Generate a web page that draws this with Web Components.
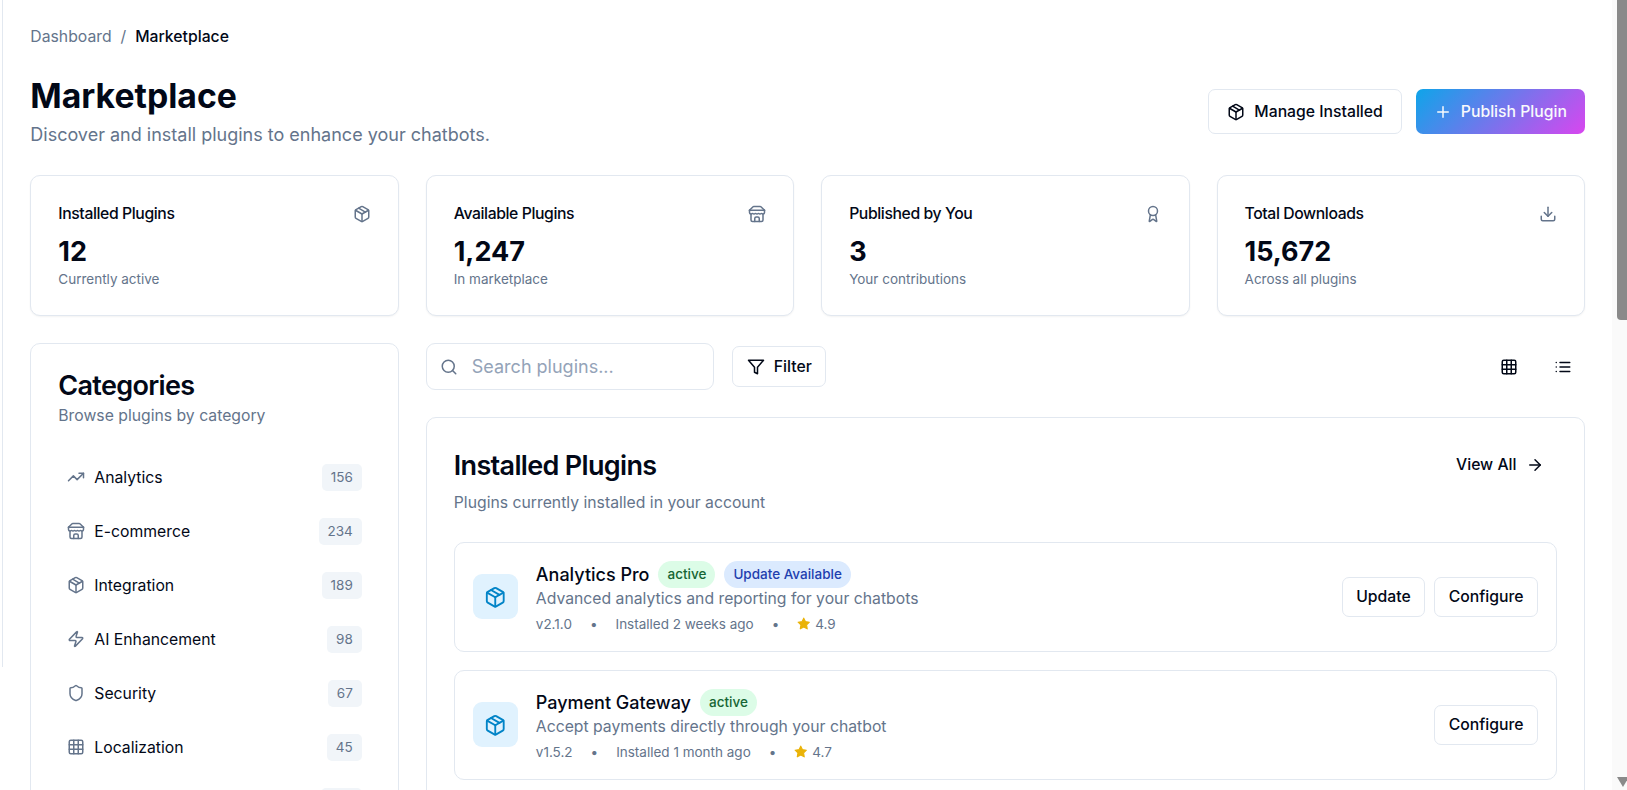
<!DOCTYPE html>
<html lang="en">
<head>
<meta charset="utf-8">
<title>Marketplace</title>
<style>
  html, body { margin: 0; height: 790px; overflow: hidden; background: #fff; }
  body { font-family: Inter, "Liberation Sans", sans-serif; color: #020817; }
</style>
</head>
<body>
<mp-shell>
  <mp-header></mp-header>
  <mp-stats>
    <mp-stat label="Installed Plugins" value="12" note="Currently active" icon="package"></mp-stat>
    <mp-stat label="Available Plugins" value="1,247" note="In marketplace" icon="store"></mp-stat>
    <mp-stat label="Published by You" value="3" note="Your contributions" icon="award"></mp-stat>
    <mp-stat label="Total Downloads" value="15,672" note="Across all plugins" icon="download"></mp-stat>
  </mp-stats>
  <mp-columns>
    <mp-categories slot="side">
      <mp-category icon="trending" count="156">Analytics</mp-category>
      <mp-category icon="store" count="234">E-commerce</mp-category>
      <mp-category icon="package" count="189">Integration</mp-category>
      <mp-category icon="zap" count="98">AI Enhancement</mp-category>
      <mp-category icon="shield" count="67">Security</mp-category>
      <mp-category icon="grid" count="45">Localization</mp-category>
      <mp-category></mp-category>
    </mp-categories>
    <mp-toolbar></mp-toolbar>
    <mp-installed>
      <mp-plugin name="Analytics Pro" desc="Advanced analytics and reporting for your chatbots" version="v2.1.0" installed="Installed 2 weeks ago" rating="4.9" update></mp-plugin>
      <mp-plugin name="Payment Gateway" desc="Accept payments directly through your chatbot" version="v1.5.2" installed="Installed 1 month ago" rating="4.7"></mp-plugin>
    </mp-installed>
  </mp-columns>
</mp-shell>
<script>
(function() {
// lucide-style icon bodies, all on a 24 box
const ICONS = {
  package: '<path d="m7.5 4.27 9 5.15"/><path d="M21 8a2 2 0 0 0-1-1.73l-7-4a2 2 0 0 0-2 0l-7 4A2 2 0 0 0 3 8v8a2 2 0 0 0 1 1.73l7 4a2 2 0 0 0 2 0l7-4A2 2 0 0 0 21 16Z"/><path d="m3.3 7 8.7 5 8.7-5"/><path d="M12 22V12"/>',
  store: '<path d="m2 7 4.41-4.41A2 2 0 0 1 7.83 2h8.34a2 2 0 0 1 1.42.59L22 7"/><path d="M4 12v8a2 2 0 0 0 2 2h12a2 2 0 0 0 2-2v-8"/><path d="M15 22v-4a2 2 0 0 0-2-2h-2a2 2 0 0 0-2 2v4"/><path d="M2 7h20"/><path d="M22 7v3a2 2 0 0 1-2 2a2.7 2.7 0 0 1-1.59-.63.7.7 0 0 0-.82 0A2.7 2.7 0 0 1 16 12a2.7 2.7 0 0 1-1.59-.63.7.7 0 0 0-.82 0A2.7 2.7 0 0 1 12 12a2.7 2.7 0 0 1-1.59-.63.7.7 0 0 0-.82 0A2.7 2.7 0 0 1 8 12a2.7 2.7 0 0 1-1.59-.63.7.7 0 0 0-.82 0A2.7 2.7 0 0 1 4 12a2 2 0 0 1-2-2V7"/>',
  award: '<path d="m15.477 12.89 1.515 8.526a.5.5 0 0 1-.81.47l-3.58-2.687a1 1 0 0 0-1.197 0l-3.586 2.686a.5.5 0 0 1-.81-.469l1.514-8.526"/><circle cx="12" cy="8" r="6"/>',
  download: '<path d="M21 15v4a2 2 0 0 1-2 2H5a2 2 0 0 1-2-2v-4"/><polyline points="7 10 12 15 17 10"/><line x1="12" y1="15" x2="12" y2="3"/>',
  search: '<circle cx="11" cy="11" r="8"/><path d="m21 21-4.3-4.3"/>',
  filter: '<polygon points="22 3 2 3 10 12.46 10 19 14 21 14 12.46 22 3"/>',
  grid: '<rect width="18" height="18" x="3" y="3" rx="2"/><path d="M3 9h18"/><path d="M3 15h18"/><path d="M9 3v18"/><path d="M15 3v18"/>',
  list: '<line x1="8" y1="6" x2="21" y2="6"/><line x1="8" y1="12" x2="21" y2="12"/><line x1="8" y1="18" x2="21" y2="18"/><line x1="3" y1="6" x2="3.01" y2="6"/><line x1="3" y1="12" x2="3.01" y2="12"/><line x1="3" y1="18" x2="3.01" y2="18"/>',
  arrow: '<path d="M5 12h14"/><path d="m12 5 7 7-7 7"/>',
  plus: '<path d="M5 12h14"/><path d="M12 5v14"/>',
  trending: '<polyline points="22 7 13.5 15.5 8.5 10.5 2 17"/><polyline points="16 7 22 7 22 13"/>',
  zap: '<path d="M4 14a1 1 0 0 1-.78-1.63l9.9-10.2a.5.5 0 0 1 .86.46l-1.92 6.02A1 1 0 0 0 13 10h7a1 1 0 0 1 .78 1.63l-9.9 10.2a.5.5 0 0 1-.86-.46l1.92-6.02A1 1 0 0 0 11 14z"/>',
  shield: '<path d="M20 13c0 5-3.5 7.5-7.66 8.95a1 1 0 0 1-.67-.01C7.5 20.5 4 18 4 13V6a1 1 0 0 1 1-1c2 0 4.5-1.2 6.24-2.72a1.17 1.17 0 0 1 1.52 0C14.51 3.81 17 5 19 5a1 1 0 0 1 1 1z"/>',
  star: '<polygon fill="currentColor" points="12 2 15.09 8.26 22 9.27 17 14.14 18.18 21.02 12 17.77 5.82 21.02 7 14.14 2 9.27 8.91 8.26"/>'
};

// small helper so every element below stays short
function define(tag, css, html) {
  customElements.define(tag, class extends HTMLElement {
    connectedCallback() {
      if (this.shadowRoot) return;
      const a = (n) => this.getAttribute(n) || '';
      const root = this.attachShadow({mode: 'open'});
      root.innerHTML = `<style>${css}</style>${html(a, this)}`;
    }
  });
}

define('mp-icon', ':host{display:inline-flex;flex:none;line-height:0} svg{display:block}', (a) => {
  const size = a('size') || 18;
  return `<svg xmlns="http://www.w3.org/2000/svg" width="${size}" height="${size}" viewBox="0 0 24 24" fill="none" stroke="currentColor" stroke-width="2" stroke-linecap="round" stroke-linejoin="round">${ICONS[a('name')] || ''}</svg>`;
});

// default is the small outline button, --h and --px make the bigger ones
define('mp-button', `
  :host{display:inline-flex}
  div{box-sizing:border-box;display:flex;align-items:center;justify-content:center;height:var(--h,40.5px);padding:0 var(--px,13.5px);gap:9px;
      border:1px solid #e2e8f0;border-radius:7px;background:#fff;color:#020817;font:500 15.75px/1 Inter,sans-serif;white-space:nowrap}
  :host([primary]) div{border:0;color:#f8fafc;background:linear-gradient(135deg,#0ea5e9,#d946ef)}
  :host([ghost]) div{border:0;background:transparent}
`, () => '<div><slot></slot></div>');

define('mp-shell', `
  :host{display:flex;height:790px;overflow:hidden;position:relative}
  .rail{flex:none;box-sizing:border-box;width:3.3px;height:667px;border-right:1px solid #e2e8f0}
  main{flex:1;min-width:0;box-sizing:border-box;padding:26px 27px 0;display:flex;flex-direction:column;margin-right:15px}
  .bar{position:absolute;top:0;right:0;bottom:0;width:15px;background:#fafafa;overflow:hidden}
  .thumb{position:absolute;top:0;right:0;width:10px;height:320px;background:#8a8a8a;border-radius:0 0 0 4px}
  .arrow{position:absolute;right:-2px;bottom:3px;width:0;height:0;border-left:6.5px solid transparent;border-right:6.5px solid transparent;border-top:10px solid #8a8a8a}
`, () => `<div class="rail"></div><main><slot></slot></main><div class="bar"><div class="thumb"></div><div class="arrow"></div></div>`);

define('mp-header', `
  :host{display:block}
  nav{display:flex;gap:9px;font-size:15.75px;line-height:22.5px;color:#64748b}
  nav b{font-weight:500;color:#020817}
  .row{display:flex;justify-content:space-between;align-items:flex-start;margin-top:27px}
  h1{margin:0;font-size:33.75px;line-height:40.5px;font-weight:700;color:#020817}
  p{margin:4.5px 0 0;font-size:18px;line-height:27px;color:#64748b}
  .acts{display:flex;gap:14px;margin-top:13.8px}
  mp-button{--h:45px;--px:18px}
`, () => `<nav><span>Dashboard</span><span>/</span><b>Marketplace</b></nav>
  <div class="row"><div><h1>Marketplace</h1><p>Discover and install plugins to enhance your chatbots.</p></div>
  <div class="acts"><mp-button><mp-icon name="package"></mp-icon>Manage Installed</mp-button>
  <mp-button primary><mp-icon name="plus"></mp-icon>Publish Plugin</mp-button></div></div>`);

define('mp-stats', ':host{display:grid;grid-template-columns:repeat(4,1fr);gap:27px;margin-top:27.8px}', () => '<slot></slot>');

define('mp-stat', `
  :host{display:block;box-sizing:border-box;height:141px;padding:26px 27px 27px;border:1px solid #e2e8f0;border-radius:10px;background:#fff;box-shadow:0 1px 2px rgba(0,0,0,.05)}
  .top{display:flex;justify-content:space-between;align-items:center;height:22.5px}
  .label{font-size:15.75px;font-weight:500;color:#020817;letter-spacing:-.4px}
  mp-icon{color:#64748b}
  .value{margin-top:9px;font-size:27px;line-height:36px;font-weight:700;color:#020817}
  .note{font-size:13.5px;line-height:18px;color:#64748b}
`, (a) => `<div class="top"><span class="label">${a('label')}</span><mp-icon name="${a('icon')}"></mp-icon></div>
  <div class="value">${a('value')}</div><div class="note">${a('note')}</div>`);

define('mp-columns', `
  :host{display:grid;grid-template-columns:368.5px 1fr;column-gap:27px;align-items:start;margin-top:27px}
  .main{display:flex;flex-direction:column;gap:27.5px;min-width:0}
`, () => '<div><slot name="side"></slot></div><div class="main"><slot></slot></div>');

define('mp-categories', `
  :host{display:block;box-sizing:border-box;padding:27px 27px 20px;border:1px solid #e2e8f0;border-radius:10px;background:#fff}
  h2{margin:1px 0 0;font-size:27px;line-height:27px;font-weight:600;letter-spacing:-.675px;color:#020817}
  p{margin:5.75px 0 0;font-size:15.75px;line-height:22.5px;color:#64748b}
  .list{margin-top:27px;display:flex;flex-direction:column;gap:9px}
`, () => '<h2>Categories</h2><p>Browse plugins by category</p><div class="list"><slot></slot></div>');

define('mp-category', `
  :host{display:flex;align-items:center;height:45px;padding:0 9px;gap:9px;font-size:15.75px;color:#020817}
  mp-icon{color:#64748b}
  .name{flex:1}
  .count{box-sizing:border-box;text-align:center;height:27px;padding:0 9px;border-radius:5px;background:#f1f5f9;color:#64748b;font-size:13.5px;line-height:27px}
  :host(:last-child) .count{width:41px}
`, (a) => `${a('icon') ? `<mp-icon name="${a('icon')}"></mp-icon>` : ''}<span class="name"><slot></slot></span><span class="count">${a('count')}</span>`);

define('mp-toolbar', `
  :host{display:flex;align-items:center;height:46.5px;gap:18.5px}
  .search{box-sizing:border-box;width:288px;height:46.5px;display:flex;align-items:center;gap:13.5px;padding:0 13.5px;border:1px solid #e2e8f0;border-radius:9px;color:#94a3b8;font-size:18px}
  .search mp-icon{color:#64748b}
  .views{margin-left:auto;display:flex;gap:9px}
  .v{width:45px;height:40.5px;display:flex;align-items:center;justify-content:center;color:#020817}
`, () => `<div class="search"><mp-icon name="search"></mp-icon><span>Search plugins...</span></div>
  <mp-button><mp-icon name="filter"></mp-icon>Filter</mp-button>
  <div class="views"><div class="v"><mp-icon name="grid"></mp-icon></div><div class="v"><mp-icon name="list"></mp-icon></div></div>`);

define('mp-installed', `
  :host{display:block;box-sizing:border-box;padding:26px 27px 27px;border:1px solid #e2e8f0;border-radius:10px;background:#fff}
  .top{display:flex;justify-content:space-between;align-items:center;height:40.5px}
  h2{margin:3px 0 0;font-size:27px;line-height:36px;font-weight:600;letter-spacing:-.675px;color:#020817}
  p{margin:7.7px 0 0;font-size:15.75px;line-height:22.5px;color:#64748b}
  .list{margin-top:27px;display:flex;flex-direction:column;gap:18px}
`, () => `<div class="top"><h2>Installed Plugins</h2><mp-button ghost>View All<mp-icon name="arrow"></mp-icon></mp-button></div>
  <p>Plugins currently installed in your account</p>
  <div class="list"><slot></slot></div>`);

define('mp-pill', `
  :host{display:inline-flex;align-items:center;height:27px;padding:0 9px;border-radius:14px;font-size:13.5px;font-weight:500;white-space:nowrap;background:#dcfce7;color:#166534}
  :host([blue]){background:#dbeafe;color:#1e40af}
`, () => '<slot></slot>');

define('mp-plugin', `
  :host{display:flex;align-items:center;box-sizing:border-box;height:110px;padding:0 18px;gap:18px;border:1px solid #e2e8f0;border-radius:10px;background:#fff}
  .box{flex:none;width:45px;height:45px;border-radius:9px;background:#e0f2fe;color:#0284c7;display:flex;align-items:center;justify-content:center}
  .body{flex:1;min-width:0}
  .head{display:flex;align-items:center;gap:9px;height:27px}
  .name{font-size:18px;font-weight:500;color:#020817}
  .desc{font-size:15.75px;line-height:22.5px;color:#64748b}
  .meta{display:flex;align-items:center;gap:18px;margin-top:4.5px;font-size:13.5px;line-height:18px;color:#64748b}
  .rate{display:flex;align-items:center;gap:4.5px}
  .rate mp-icon{color:#eab308}
  .acts{display:flex;gap:9px}
`, (a, el) => `<div class="box"><mp-icon name="package" size="22.5"></mp-icon></div>
  <div class="body">
    <div class="head"><span class="name">${a('name')}</span><mp-pill>active</mp-pill>${el.hasAttribute('update') ? '<mp-pill blue>Update Available</mp-pill>' : ''}</div>
    <div class="desc">${a('desc')}</div>
    <div class="meta"><span>${a('version')}</span><span>•</span><span>${a('installed')}</span><span>•</span><span class="rate"><mp-icon name="star" size="13.5"></mp-icon>${a('rating')}</span></div>
  </div>
  <div class="acts">${el.hasAttribute('update') ? '<mp-button>Update</mp-button>' : ''}<mp-button>Configure</mp-button></div>`);
}());
</script>
</body>
</html>
